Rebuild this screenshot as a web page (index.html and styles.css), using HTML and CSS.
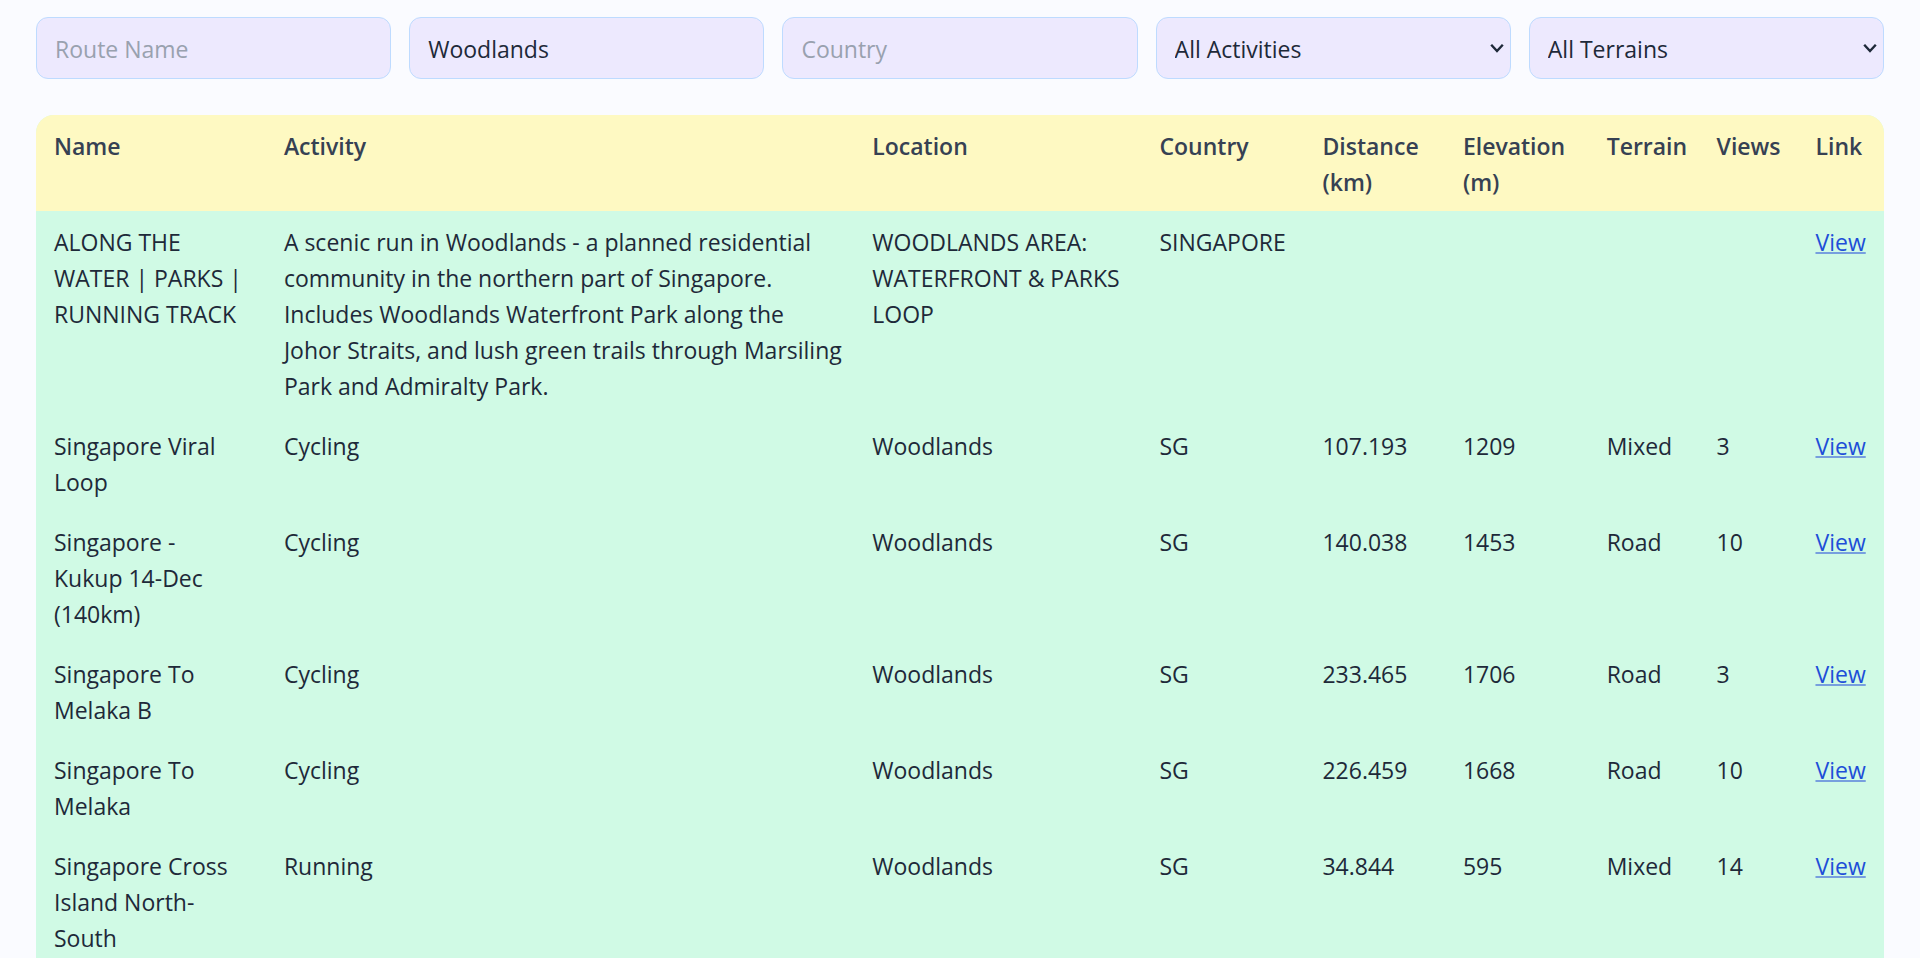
FILE: index.html
```html
<!DOCTYPE html>
<html lang="en">
<head>
  <meta charset="utf-8">
  <meta name="viewport" content="width=device-width, initial-scale=1">
  <title>Routes</title>
  <link rel="stylesheet" href="styles.css">
</head>
<body>
  <main class="page">
    <form class="filters">
      <input class="field" type="text" placeholder="Route Name" aria-label="Route Name">
      <input class="field" type="text" placeholder="Location" aria-label="Location" value="Woodlands">
      <input class="field" type="text" placeholder="Country" aria-label="Country">
      <div class="picker">
        <select class="field" aria-label="Activity">
          <option>All Activities</option>
          <option>Cycling</option>
          <option>Running</option>
        </select>
        <svg class="chevron" viewBox="0 0 14 10" aria-hidden="true"><path d="M1.2 1.8 7 8l5.8-6.2"/></svg>
      </div>
      <div class="picker">
        <select class="field" aria-label="Terrain">
          <option>All Terrains</option>
          <option>Mixed</option>
          <option>Road</option>
        </select>
        <svg class="chevron" viewBox="0 0 14 10" aria-hidden="true"><path d="M1.2 1.8 7 8l5.8-6.2"/></svg>
      </div>
    </form>

    <div class="table-card">
      <table class="routes">
        <colgroup>
          <col class="col-name"><col class="col-activity"><col class="col-location">
          <col class="col-country"><col class="col-distance"><col class="col-elevation">
          <col class="col-terrain"><col class="col-views"><col class="col-link">
        </colgroup>
        <thead>
          <tr>
            <th scope="col">Name</th>
            <th scope="col">Activity</th>
            <th scope="col">Location</th>
            <th scope="col">Country</th>
            <th scope="col">Distance (km)</th>
            <th scope="col">Elevation (m)</th>
            <th scope="col">Terrain</th>
            <th scope="col">Views</th>
            <th scope="col">Link</th>
          </tr>
        </thead>
        <tbody>
          <tr>
            <td>ALONG THE WATER | PARKS | RUNNING TRACK</td>
            <td>A scenic run in Woodlands - a planned residential community in the northern part of Singapore. Includes Woodlands Waterfront Park along the Johor Straits, and lush green trails through Marsiling Park and Admiralty Park.</td>
            <td>WOODLANDS AREA: WATERFRONT &amp; PARKS LOOP</td>
            <td>SINGAPORE</td>
            <td></td>
            <td></td>
            <td></td>
            <td></td>
            <td><a class="view" href="#">View</a></td>
          </tr>
          <tr>
            <td>Singapore Viral Loop</td>
            <td>Cycling</td>
            <td>Woodlands</td>
            <td>SG</td>
            <td>107.193</td>
            <td>1209</td>
            <td>Mixed</td>
            <td>3</td>
            <td><a class="view" href="#">View</a></td>
          </tr>
          <tr>
            <td>Singapore - Kukup 14-Dec (140km)</td>
            <td>Cycling</td>
            <td>Woodlands</td>
            <td>SG</td>
            <td>140.038</td>
            <td>1453</td>
            <td>Road</td>
            <td>10</td>
            <td><a class="view" href="#">View</a></td>
          </tr>
          <tr>
            <td>Singapore To Melaka B</td>
            <td>Cycling</td>
            <td>Woodlands</td>
            <td>SG</td>
            <td>233.465</td>
            <td>1706</td>
            <td>Road</td>
            <td>3</td>
            <td><a class="view" href="#">View</a></td>
          </tr>
          <tr>
            <td>Singapore To Melaka</td>
            <td>Cycling</td>
            <td>Woodlands</td>
            <td>SG</td>
            <td>226.459</td>
            <td>1668</td>
            <td>Road</td>
            <td>10</td>
            <td><a class="view" href="#">View</a></td>
          </tr>
          <tr>
            <td>Singapore Cross Island North-South</td>
            <td>Running</td>
            <td>Woodlands</td>
            <td>SG</td>
            <td>34.844</td>
            <td>595</td>
            <td>Mixed</td>
            <td>14</td>
            <td><a class="view" href="#">View</a></td>
          </tr>
        </tbody>
      </table>
    </div>
  </main>
</body>
</html>
```
FILE: styles.css
```css
*,
*::before,
*::after {
  box-sizing: border-box;
}

body {
  margin: 0;
  background: #fafbff;
  color: #1e2939;
  font-family: "Segoe UI", "Open Sans", "Noto Sans", sans-serif;
  font-size: 23px;
  line-height: 36px;
}

.page {
  padding: 17px 36px 0;
}

.filters {
  display: grid;
  grid-template-columns: repeat(5, minmax(0, 1fr));
  gap: 18px;
  margin-bottom: 36px;
}

.field {
  width: 100%;
  height: 62px;
  margin: 0;
  padding: 13px 18px 11px;
  border: 1px solid #bedbff;
  border-radius: 12px;
  background: #ede9fe;
  color: inherit;
  font: inherit;
  appearance: none;
}

.field::placeholder {
  color: #99a1af;
  opacity: 1;
}

.picker {
  display: grid;
  align-items: center;
}

.picker > * {
  grid-area: 1 / 1;
}

.chevron {
  width: 14px;
  height: 10px;
  margin-right: 7px;
  justify-self: end;
  fill: none;
  stroke: #1e2939;
  stroke-width: 2.4;
  pointer-events: none;
}

.table-card {
  overflow: hidden;
  border-radius: 18px 18px 0 0;
  background: #d0fae5;
}

.routes {
  width: 100%;
  table-layout: fixed;
  border-collapse: collapse;
}

.routes thead {
  background: #fef9c2;
  color: #364153;
}

.routes th,
.routes td {
  padding: 13px 12px 11px 18px;
  text-align: left;
  vertical-align: top;
}

.routes td:first-child {
  padding-right: 18px;
}

.routes th {
  font-weight: 600;
}

.col-name { width: 12.44%; }
.col-activity { width: 31.84%; }
.col-location { width: 15.54%; }
.col-country { width: 8.82%; }
.col-distance { width: 7.6%; }
.col-elevation { width: 7.78%; }
.col-terrain { width: 5.95%; }
.col-views { width: 5.35%; }
.col-link { width: 4.68%; }

.view {
  color: #1d4ed8;
  text-decoration: underline 2px #779fde;
  text-underline-offset: 1px;
}
```
